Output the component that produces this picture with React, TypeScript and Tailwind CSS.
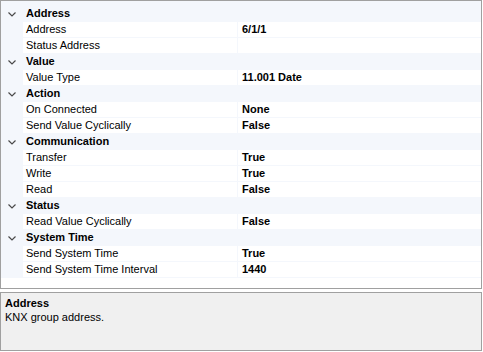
import React from "react";

type Row =
  | { kind: "cat"; label: string }
  | { kind: "prop"; label: string; value: string };

const rows: Row[] = [
  { kind: "cat", label: "Address" },
  { kind: "prop", label: "Address", value: "6/1/1" },
  { kind: "prop", label: "Status Address", value: "" },
  { kind: "cat", label: "Value" },
  { kind: "prop", label: "Value Type", value: "11.001 Date" },
  { kind: "cat", label: "Action" },
  { kind: "prop", label: "On Connected", value: "None" },
  { kind: "prop", label: "Send Value Cyclically", value: "False" },
  { kind: "cat", label: "Communication" },
  { kind: "prop", label: "Transfer", value: "True" },
  { kind: "prop", label: "Write", value: "True" },
  { kind: "prop", label: "Read", value: "False" },
  { kind: "cat", label: "Status" },
  { kind: "prop", label: "Read Value Cyclically", value: "False" },
  { kind: "cat", label: "System Time" },
  { kind: "prop", label: "Send System Time", value: "True" },
  { kind: "prop", label: "Send System Time Interval", value: "1440" },
];

function Chevron() {
  return (
    <svg width="8" height="5" viewBox="0 0 8 5" className="block">
      <polyline points="0.5,0.5 4,4 7.5,0.5" fill="none" stroke="#4a4a4a" strokeWidth="1.2" />
    </svg>
  );
}

export default function App() {
  return (
    <div
      className="w-[483px] h-[352px] bg-white text-[11px] text-black leading-none"
      style={{ fontFamily: '"Liberation Sans", Arial, sans-serif' }}
    >
      <div className="w-[482px] h-[289px] border border-[#a0a0a0] bg-white flex flex-col">
        <div className="h-[5px] bg-[#f4f7fc]" />
        {rows.map((r, i) =>
          r.kind === "cat" ? (
            <div key={i} className="h-[16px] flex items-center bg-[#f4f7fc] border-b border-[#f4f7fc]">
              <div className="w-[22px] flex pl-[7px] pt-[1px]">
                <Chevron />
              </div>
              <span className="pl-[3px] font-bold">{r.label}</span>
            </div>
          ) : (
            <div key={i} className="h-[16px] flex border-b border-[#f4f7fc]">
              <div className="w-[22px] bg-[#f4f7fc]" />
              <div className="w-[214px] bg-white flex items-center pl-[3px]">{r.label}</div>
              <div className="w-[1px] bg-[#f4f7fc]" />
              <div className="flex-1 bg-white flex items-center pl-[4px] font-bold">{r.value}</div>
            </div>
          )
        )}
      </div>
      <div className="mt-[3px] w-[482px] h-[59px] border border-[#a0a0a0] bg-[#f0f0f0] px-[4px] pt-[4px]">
        <div className="font-bold leading-[13px]">Address</div>
        <div className="leading-[13px] mt-[1px]">KNX group address.</div>
      </div>
    </div>
  );
}
